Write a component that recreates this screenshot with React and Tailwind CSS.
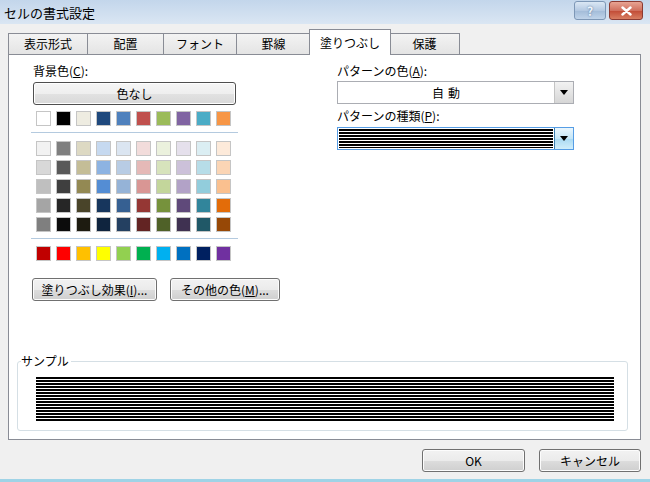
import React from "react";

const FONT = "font-['Noto_Sans_CJK_JP','Noto_Sans',sans-serif]";

const themeRow = ["#FFFFFF", "#000000", "#EEECE1", "#1F497D", "#4F81BD", "#C0504D", "#9BBB59", "#8064A2", "#4BACC6", "#F79646"];
const tintRows = [
  ["#F2F2F2", "#7F7F7F", "#DDD9C3", "#C6D9F0", "#DBE5F1", "#F2DCDB", "#EBF1DD", "#E5E0EC", "#DBEEF3", "#FDEADA"],
  ["#D8D8D8", "#595959", "#C4BD97", "#8DB3E2", "#B8CCE4", "#E5B9B7", "#D7E3BC", "#CCC1D9", "#B7DDE8", "#FBD5B5"],
  ["#BFBFBF", "#3F3F3F", "#938953", "#548DD4", "#95B3D7", "#D99694", "#C3D69B", "#B2A2C7", "#92CDDC", "#FAC08F"],
  ["#A5A5A5", "#262626", "#494429", "#17365D", "#366092", "#953734", "#76923C", "#5F497A", "#31859B", "#E36C09"],
  ["#7F7F7F", "#0C0C0C", "#1D1B10", "#0F243E", "#244061", "#632423", "#4F6128", "#3F3151", "#205867", "#974806"],
];
const standardRow = ["#C00000", "#FF0000", "#FFC000", "#FFFF00", "#92D050", "#00B050", "#00B0F0", "#0070C0", "#002060", "#7030A0"];

const tabs = [
  { label: "表示形式", w: "w-[80px]" },
  { label: "配置", w: "w-[77px]" },
  { label: "フォント", w: "w-[74px]" },
  { label: "罫線", w: "w-[75px]" },
  { label: "塗りつぶし", w: "w-[82px]", active: true },
  { label: "保護", w: "w-[71px]" },
];

const btn =
  "shrink-0 flex items-center justify-center h-[23px] rounded-[3px] border border-[#707070] bg-[image:linear-gradient(to_bottom,#f2f2f2_0%,#ebebeb_50%,#dddddd_51%,#cfcfcf_100%)] text-[12px] text-black shadow-[inset_0_0_0_1px_#fcfcfc] whitespace-nowrap";

const stripes = "bg-[image:repeating-linear-gradient(to_bottom,#000_0px,#000_2px,#fff_2px,#fff_3px)]";

function Swatch({ color }) {
  return <div className="w-[15px] h-[15px] border border-[#c5c5c5]" style={{ backgroundColor: color }} />;
}

function SwatchRow({ colors }) {
  return (
    <div className="flex gap-[5px]">
      {colors.map((c, i) => (
        <Swatch key={i} color={c} />
      ))}
    </div>
  );
}

function Arrow() {
  return (
    <svg width="8" height="5" viewBox="0 0 8 5">
      <path d="M0 0 H8 L4 5 Z" fill="#000" />
    </svg>
  );
}

export default function App() {
  return (
    <div className={`w-[650px] h-[482px] flex flex-col bg-[#f0f0f0] overflow-hidden border-b-[3px] border-[#9fd3e6] ${FONT}`}>
      {/* title bar */}
      <div className="h-[24px] flex items-center justify-between pl-[4px] pr-[7px] bg-[image:linear-gradient(to_bottom,#c3d6eb,#dae6f3)]">
        <span className="text-[13px] text-black leading-none">セルの書式設定</span>
        <div className="flex gap-[3px] self-start mt-[1px]">
          <div className="w-[32px] h-[19px] rounded-[3px] border border-[#7d97b6] bg-[image:linear-gradient(to_bottom,#dbe7f4,#b4c9e2_50%,#a2bbd8_51%,#c0d4ea)] flex items-center justify-center text-[12px] font-bold text-[#eef4fb] leading-none [text-shadow:0_0_2px_#4a6a92]">
            ?
          </div>
          <div className="w-[34px] h-[19px] rounded-[3px] border border-[#8b3a32] bg-[image:linear-gradient(to_bottom,#e8a493,#d0705e_50%,#c14a35_51%,#d87e62)] flex items-center justify-center">
            <svg width="11" height="10" viewBox="0 0 11 10">
              <path d="M1.5 1.5 L9.5 8.5 M9.5 1.5 L1.5 8.5" stroke="#fff" strokeWidth="2.4" strokeLinecap="round" />
            </svg>
          </div>
        </div>
      </div>

      {/* tabs */}
      <div className="flex items-end h-[25px] mt-[5px] pl-[8px]">
        {tabs.map((t, i) =>
          t.active ? (
            <div
              key={i}
              className={`${t.w} h-[26px] -mb-px -ml-[2px] -mr-[1px] relative z-10 bg-white border border-b-0 border-[#898c95] flex items-center justify-center text-[12px] text-black`}
            >
              {t.label}
            </div>
          ) : (
            <div
              key={i}
              className={`${t.w} h-[21px] ${i === 0 ? "" : "-ml-px"} border border-b-0 border-[#898c95] bg-[image:linear-gradient(to_bottom,#f3f3f3,#e4e4e4)] flex items-center justify-center text-[12px] text-black`}
            >
              {t.label}
            </div>
          )
        )}
      </div>

      {/* panel */}
      <div className="ml-[8px] w-[633px] h-[386px] bg-white border border-[#898c95] pt-[9px] flex flex-col">
        <div className="flex">
          {/* left column */}
          <div className="ml-[24px] w-[203px] flex flex-col">
            <div className="h-[14px] leading-[14px] text-[12px] text-black">
              背景色(<span className="underline">C</span>):
            </div>
            <div className="mt-[4px] h-[23px] rounded-[3px] border border-[#4f4f4f] bg-[image:linear-gradient(to_bottom,#f6f6f6_0%,#efefef_50%,#e2e2e2_51%,#d9d9d9_100%)] shadow-[inset_0_0_0_1px_#fff] flex items-center justify-center text-[12px] text-black">
              色なし
            </div>
            <div className="mt-[6px] ml-[3px]">
              <SwatchRow colors={themeRow} />
            </div>
            <div className="mt-[6px] -ml-[2px] w-[207px] h-px bg-[#b4cadf]" />
            <div className="mt-[8px] ml-[3px] flex flex-col gap-[4px]">
              {tintRows.map((r, i) => (
                <SwatchRow key={i} colors={r} />
              ))}
            </div>
            <div className="mt-[6px] -ml-[2px] w-[207px] h-px bg-[#b4cadf]" />
            <div className="mt-[7px] ml-[3px]">
              <SwatchRow colors={standardRow} />
            </div>
            <div className="mt-[17px] -ml-[1px] flex gap-[13px]">
              <div className={`${btn} w-[125px]`}>
                <span>
                  塗りつぶし効果(<span className="underline">I</span>)...
                </span>
              </div>
              <div className={`${btn} w-[110px]`}>
                <span>
                  その他の色(<span className="underline">M</span>)...
                </span>
              </div>
            </div>
          </div>

          {/* right column */}
          <div className="ml-[101px] w-[237px] flex flex-col">
            <div className="h-[14px] leading-[14px] text-[12px] text-black">
              パターンの色(<span className="underline">A</span>):
            </div>
            <div className="mt-[3px] h-[23px] border border-[#abadb3] flex">
              <div className="flex-1 flex items-center justify-center text-[12px] text-black tracking-[4px] pl-[4px]">
                自動
              </div>
              <div className="w-[19px] border-l border-[#c4c4c4] bg-[image:linear-gradient(to_bottom,#f2f2f2,#d6d6d6)] flex items-center justify-center">
                <Arrow />
              </div>
            </div>
            <div className="mt-[5px] h-[14px] leading-[14px] text-[12px] text-black">
              パターンの種類(<span className="underline">P</span>):
            </div>
            <div className="mt-[4px] h-[23px] border border-[#569de5] flex">
              <div className="flex-1 p-[1px]">
                <div className={`h-full ${stripes}`} />
              </div>
              <div className="w-[19px] border-l border-[#3c7fb1] bg-[image:linear-gradient(to_bottom,#eaf6fd,#c4e5f6_50%,#a9d9f2_51%,#d0eefb)] flex items-center justify-center">
                <Arrow />
              </div>
            </div>
          </div>
        </div>

        {/* sample */}
        <div className="relative mt-[60px] ml-[8px] w-[611px] h-[70px] border border-[#d5dfe5] rounded-[3px] pt-[15px] pl-[18px] pr-[13px]">
          <span className="absolute -top-[9px] left-[3px] bg-white pr-[2px] text-[12px] leading-[16px] text-black">
            サンプル
          </span>
          <div className={`h-[44px] ${stripes}`} />
        </div>
      </div>

      {/* footer buttons */}
      <div className="mt-[9px] flex justify-end pr-[9px] gap-[14px]">
        <div className={`${btn} w-[103px]`}>OK</div>
        <div className={`${btn} w-[102px]`}>キャンセル</div>
      </div>
    </div>
  );
}
